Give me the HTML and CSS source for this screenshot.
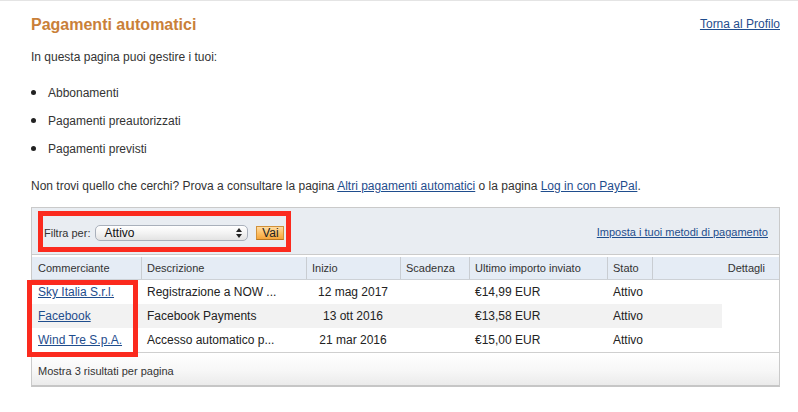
FILE: index.html
```html
<!DOCTYPE html>
<html lang="it">
<head>
<meta charset="utf-8">
<title>Pagamenti automatici</title>
<link rel="stylesheet" href="styles.css">
</head>
<body>
<div class="page">
  <div class="head">
    <h1 class="title">Pagamenti automatici</h1>
    <a class="link back" href="#">Torna al Profilo</a>
  </div>
  <p class="intro">In questa pagina puoi gestire i tuoi:</p>
  <ul class="types">
    <li>Abbonamenti</li>
    <li>Pagamenti preautorizzati</li>
    <li>Pagamenti previsti</li>
  </ul>
  <p class="note">Non trovi quello che cerchi? Prova a consultare la pagina <a class="link" href="#">Altri pagamenti automatici</a> o la pagina <a class="link" href="#">Log in con PayPal</a>.</p>

  <div class="panel">
    <div class="filterbar">
      <div class="filter mark">
        <span class="filter-label">Filtra per:</span>
        <div class="select">
          <span>Attivo</span>
          <svg class="arrows" width="6" height="10" viewBox="0 0 6 10"><path d="M0 4 L3 0 L6 4 Z M0 6 L3 10 L6 6 Z" fill="#222"/></svg>
        </div>
        <button class="btn-vai" type="button">Vai</button>
      </div>
      <a class="link small" href="#">Imposta i tuoi metodi di pagamento</a>
    </div>

    <div class="grid thead">
      <div class="th">Commerciante</div>
      <div class="th sep">Descrizione</div>
      <div class="th sep">Inizio</div>
      <div class="th sep">Scadenza</div>
      <div class="th sep">Ultimo importo inviato</div>
      <div class="th sep">Stato</div>
      <div class="th sep right">Dettagli</div>
    </div>

    <div class="grid row">
      <div class="td"><a class="link" href="#">Sky Italia S.r.l.</a></div>
      <div class="td">Registrazione a NOW ...</div>
      <div class="td center">12 mag 2017</div>
      <div class="td"></div>
      <div class="td">€14,99 EUR</div>
      <div class="td">Attivo</div>
      <div class="td"></div>
    </div>
    <div class="grid row alt">
      <div class="td"><a class="link" href="#">Facebook</a></div>
      <div class="td">Facebook Payments</div>
      <div class="td center">13 ott 2016</div>
      <div class="td"></div>
      <div class="td">€13,58 EUR</div>
      <div class="td">Attivo</div>
      <div class="td"></div>
    </div>
    <div class="grid row">
      <div class="td"><a class="link" href="#">Wind Tre S.p.A.</a></div>
      <div class="td">Accesso automatico p...</div>
      <div class="td center">21 mar 2016</div>
      <div class="td"></div>
      <div class="td">€15,00 EUR</div>
      <div class="td">Attivo</div>
      <div class="td"></div>
    </div>

    <div class="footer">Mostra 3 risultati per pagina</div>

    <div class="mark merchants-mark"></div>
  </div>
</div>
</body>
</html>
```

FILE: styles.css
```css
* { box-sizing: border-box; }

html, body {
  margin: 0;
  padding: 0;
  background: #fff;
}

body {
  font-family: "Liberation Sans", Arial, Helvetica, sans-serif;
  font-size: 12px;
  color: #333;
}

.page {
  border-top: 1px solid #e4e4e4;
  padding: 0 18px 0 31px;
}

.link {
  color: #1f4d8d;
  text-decoration: underline;
}

.head {
  display: flex;
  justify-content: space-between;
  align-items: center;
  margin-top: 14px;
}

.title {
  margin: 0;
  font-size: 16px;
  line-height: 20px;
  font-weight: bold;
  color: #c98039;
}

.back {
  font-size: 12px;
  line-height: 16px;
  margin-top: -2px;
}

.intro {
  margin: 14px 0 0;
  line-height: 16px;
}

.types {
  list-style: none;
  margin: 20px 0 0;
  padding: 0;
}

.types li {
  line-height: 16px;
  margin-bottom: 12px;
}

.types li:last-child { margin-bottom: 0; }

.types li::before {
  content: "";
  display: inline-block;
  width: 5px;
  height: 5px;
  border-radius: 50%;
  background: #222;
  margin: 0 12px 0 0;
  vertical-align: 2px;
}

.note {
  margin: 21px 0 0;
  line-height: 16px;
}

/* Panel */
.panel {
  position: relative;
  margin-top: 13px;
  border: 1px solid #cacaca;
  border-bottom: 2px solid #c6c6c6;
}

.filterbar {
  display: flex;
  align-items: center;
  justify-content: space-between;
  padding: 3px 11px 2px 6px;
  background: #e9edf2;
  border-bottom: 1px solid #cbcbcb;
}

.mark {
  border: 5px solid #fb2a1e;
}

.filter {
  display: flex;
  align-items: center;
  flex: 0 0 253px;
  width: 253px;
  height: 41px;
  padding: 2px 0 0 1px;
}

.filter > * { flex-shrink: 0; }

.filter-label {
  font-size: 11px;
  color: #333;
  margin-right: 5px;
  white-space: nowrap;
}

.select {
  display: flex;
  align-items: center;
  justify-content: space-between;
  width: 153px;
  height: 16px;
  padding: 0 5px 0 8px;
  border: 1px solid #a9b0bb;
  border-radius: 5px;
  background: linear-gradient(#ffffff, #f3f3f3 50%, #e3e3e3);
  font-size: 12px;
  color: #111;
  margin-right: 8px;
}

.arrows { display: block; }

.btn-vai {
  width: 28px;
  height: 14px;
  padding: 0;
  border: 1px solid #d1913a;
  border-bottom-color: #b87621;
  background: linear-gradient(#ffdca3, #fdc066 50%, #f6a53a);
  font-family: inherit;
  font-size: 12px;
  line-height: 12px;
  color: #222;
}

.small {
  font-size: 11px;
}

/* Table */
.grid {
  display: grid;
  grid-template-columns: 109px 165px 94px 69px 138px 45px 1fr;
}

.thead {
  margin-top: 2px;
  height: 23px;
  background: #e5ecf5;
  border-bottom: 1px solid #cdd1d6;
  font-size: 11px;
  color: #333;
}

.th {
  display: flex;
  align-items: center;
  padding: 0 5px 0 6px;
  white-space: nowrap;
}

.th.sep {
  border-left: 1px solid #c9cdd2;
  padding-left: 5px;
}

.th.right {
  justify-content: flex-end;
  padding-right: 14px;
}

.row {
  height: 24px;
  font-size: 12px;
  color: #222;
}

.row.alt {
  background: linear-gradient(#f2f2f2, #f2f2f2) 0 0 / 690px 100% no-repeat;
}

.td {
  display: flex;
  align-items: center;
  padding: 0 4px 0 6px;
  white-space: nowrap;
  overflow: hidden;
}

.td.center {
  justify-content: center;
  padding: 0;
}

.footer {
  height: 33px;
  padding: 11px 6px 0;
  border-top: 1px solid #cfcfcf;
  background: linear-gradient(#ffffff, #f7f7f7 55%, #ebebeb);
  font-size: 11px;
  line-height: 14px;
  color: #333;
}

.merchants-mark {
  position: absolute;
  left: -5px;
  top: 72px;
  width: 111px;
  height: 77px;
}
```
